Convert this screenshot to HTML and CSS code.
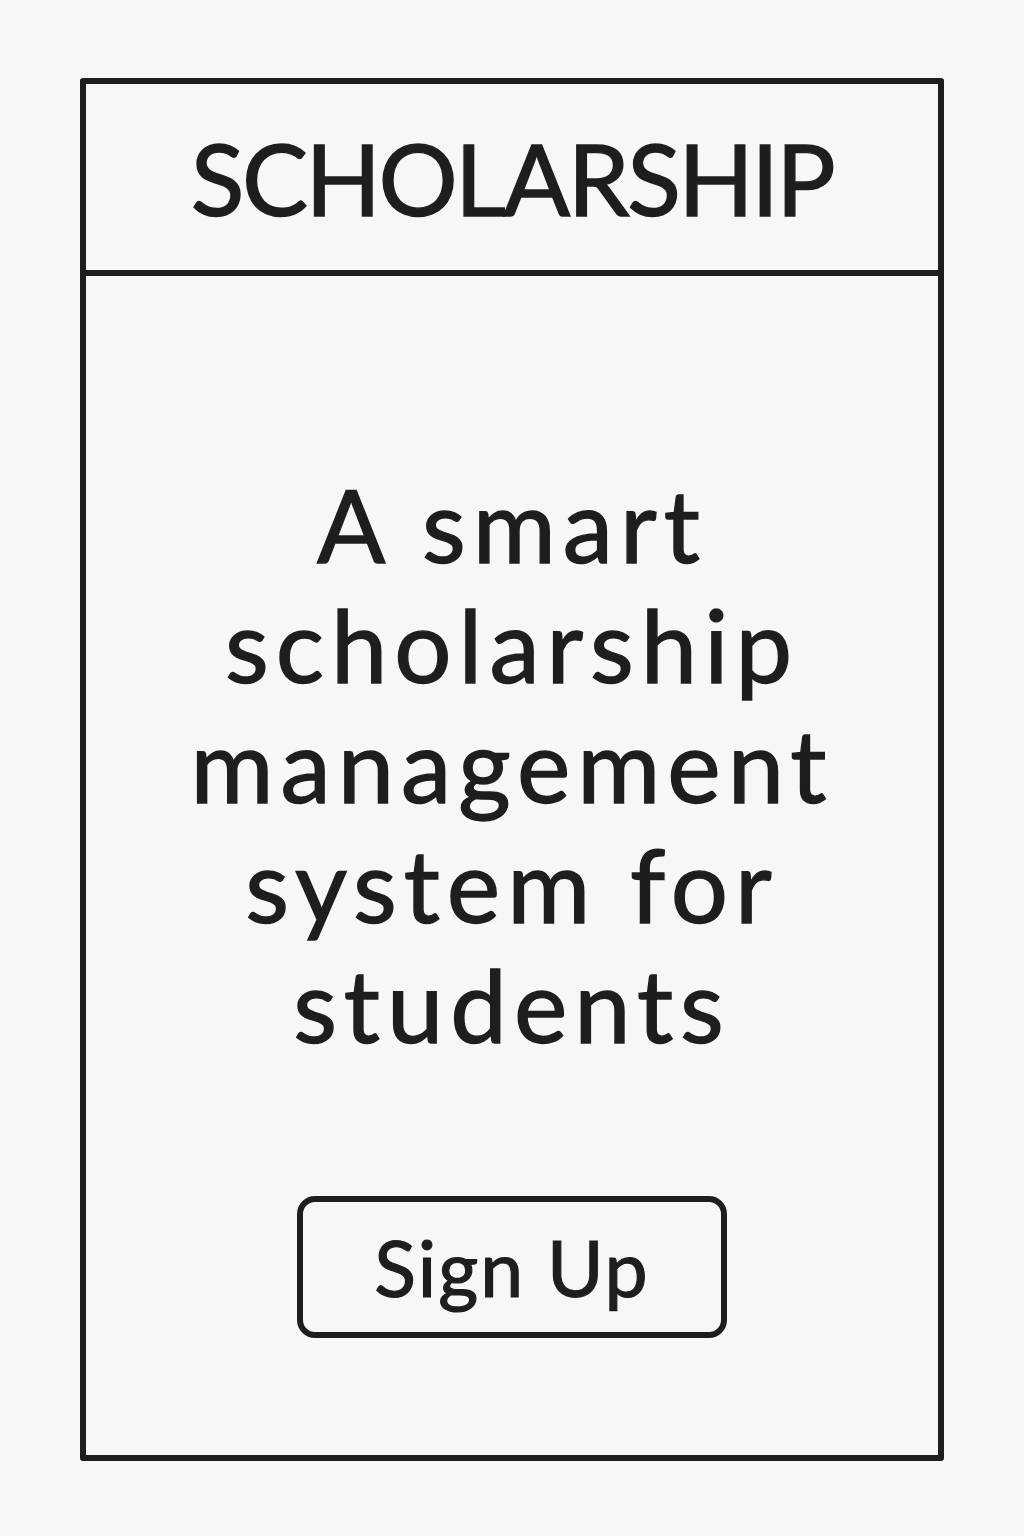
FILE: index.html
```html
<!DOCTYPE html>
<html lang="en">
<head>
<meta charset="utf-8">
<title>Scholarship</title>
<link rel="stylesheet" href="styles.css">
</head>
<body>
  <div class="frame">
    <header class="header">
      <h1 class="title">SCHOLARSHIP</h1>
    </header>
    <main class="main">
      <p class="tagline">A smart<br>scholarship<br>management<br>system for<br>students</p>
      <button class="signup" type="button">Sign Up</button>
    </main>
  </div>
</body>
</html>
```
FILE: styles.css
```css
html, body {
  margin: 0;
  padding: 0;
}
body {
  background: #f7f7f5;
  color: #1e1e1e;
  font-family: "Lato", "Open Sans", sans-serif;
  width: 1024px;
  height: 1536px;
  overflow: hidden;
}
.frame {
  box-sizing: border-box;
  margin: 78px 0 0 80px;
  width: 864px;
  height: 1383px;
  border: 6px solid #1e1e1e;
  border-radius: 3px;
  display: flex;
  flex-direction: column;
}
.header {
  height: 186px;
  border-bottom: 6px solid #1e1e1e;
  display: flex;
  align-items: center;
  justify-content: center;
}
.title {
  margin: 0;
  font-size: 99px;
  font-weight: 400;
  line-height: 1;
  letter-spacing: -2.6px;
  -webkit-text-stroke: 1.4px #1e1e1e;
}
.main {
  flex: 1;
  display: flex;
  flex-direction: column;
  align-items: center;
  padding-top: 188px;
}
.tagline {
  margin: 0;
  text-align: center;
  font-size: 101px;
  line-height: 120px;
  font-weight: 400;
  letter-spacing: 7px;
  -webkit-text-stroke: 1.4px #1e1e1e;
}
.signup {
  margin-top: 132px;
  box-sizing: border-box;
  width: 430px;
  height: 142px;
  border: 6px solid #1e1e1e;
  border-radius: 18px;
  background: transparent;
  color: #1e1e1e;
  font-family: "Lato", "Open Sans", sans-serif;
  font-size: 77px;
  font-weight: 400;
  letter-spacing: 2px;
  -webkit-text-stroke: 1.2px #1e1e1e;
  padding: 0;
  cursor: pointer;
}
```
